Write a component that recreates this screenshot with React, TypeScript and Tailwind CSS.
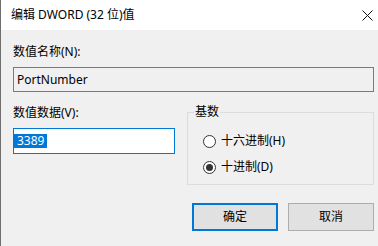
export default function App() {
    return (
        <div className="w-[378px] h-[246px] flex flex-col border-l border-[#6e6e6e] bg-[#f0f0f0] text-[12px] leading-[16px] text-black overflow-hidden" style={{ fontFamily: '"Noto Sans", "Noto Sans CJK SC", sans-serif' }}>
            {/* title bar */}
            <div className="h-[30px] bg-white flex items-center justify-between pl-[10px] pr-[3px] shrink-0">
                <span>编辑 DWORD (32 位)值</span>
                <div className="w-[12px] h-[12px] mr-[2px] flex items-center justify-center">
                    <svg width="11" height="11" viewBox="0 0 11 11" fill="none" stroke="#111" strokeWidth="1">
                        <path d="M0.5 0.5 L10.5 10.5 M10.5 0.5 L0.5 10.5" />
                    </svg>
                </div>
            </div>

            {/* body */}
            <div className="flex-1 pt-[14px] pl-[12px] pr-[4px]">
                <div>数值名称(N):</div>
                <div className="mt-[7px] h-[25px] border border-[#7a7a7a] bg-[#f0f0f0] flex items-center pl-[3px]">
                    PortNumber
                </div>

                <div className="mt-[13px] flex gap-[12px]">
                    <div className="w-[162px]">
                        <div>数值数据(V):</div>
                        <div className="mt-[7px] h-[26px] border border-[#0078d7] bg-white flex items-center">
                            <span className="bg-[#0078d7] text-white pl-[3px] pr-[3px] leading-[14px]">3389</span>
                        </div>
                    </div>

                    <fieldset className="flex-1 h-[81px] border border-[#dcdcdc] pl-[15px] pt-[13px] -mt-[1px]">
                        <legend className="-ml-[9px] px-[1px]">基数</legend>
                        <div className="flex flex-col gap-[10px]">
                            <label className="flex items-center gap-[5px]">
                                <span className="w-[13px] h-[13px] rounded-full border border-[#333] bg-white" />
                                <span>十六进制(H)</span>
                            </label>
                            <label className="flex items-center gap-[5px]">
                                <span className="w-[13px] h-[13px] rounded-full border border-[#333] bg-white flex items-center justify-center">
                                    <span className="w-[7px] h-[7px] rounded-full bg-[#333]" />
                                </span>
                                <span>十进制(D)</span>
                            </label>
                        </div>
                    </fieldset>
                </div>

                <div className="mt-[18px] flex justify-end gap-[10px]">
                    <button className="w-[86px] h-[28px] border-2 border-[#0078d7] bg-[#e1e1e1]">确定</button>
                    <button className="w-[86px] h-[28px] border border-[#adadad] bg-[#e1e1e1]">取消</button>
                </div>
            </div>
        </div>
    )
}
